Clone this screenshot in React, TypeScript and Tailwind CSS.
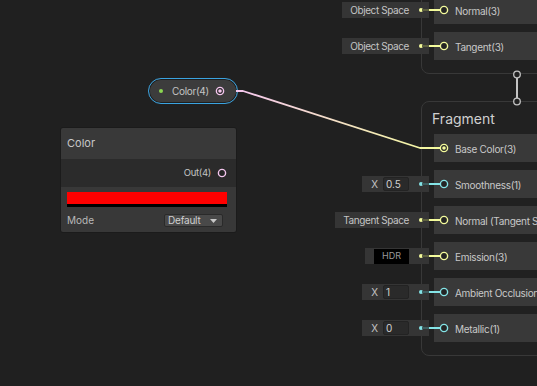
import React from "react";

const YELLOW = "#f4fb9c";
const CYAN = "#84e4e7";
const PINK = "#f4c6ee";

const Port = ({ color, connected }: { color: string; connected?: boolean }) => (
  <svg width="10" height="10" viewBox="0 0 10 10" className="shrink-0">
    <circle cx="5" cy="5" r="3.6" fill="#242424" stroke={color} strokeWidth="1.4" />
    {connected && <circle cx="5" cy="5" r="1.8" fill={color} />}
  </svg>
);

interface SlotProps {
  label: string;
  color: string;
  dim: string;
  connected?: boolean;
  field?: React.ReactNode;
  fieldWidth?: string;
}

const Slot = ({ label, color, dim, connected, field, fieldWidth }: SlotProps) => (
  <div className="relative ml-[12px] flex h-7 items-center bg-[#393939]">
    {field && (
      <>
        <div
          className={`absolute right-[calc(100%+5px)] top-[6px] flex h-4 items-center justify-end gap-[10px] bg-[#353535] pr-[6px] ${fieldWidth}`}
        >
          {field}
          <span className="h-[4px] w-[4px] rounded-full" style={{ background: color }} />
        </div>
        <div className="absolute left-[-12px] top-[13px] h-[2px] w-[7px]" style={{ background: dim }} />
        <div className="absolute left-[-5px] top-[13px] h-[2px] w-[12px]" style={{ background: color }} />
      </>
    )}
    <div className="ml-[5px] flex items-center">
      <Port color={color} connected={connected} />
    </div>
    <span className="ml-[6px] translate-y-[1px] whitespace-nowrap text-[10px] tracking-[-0.3px] text-[#c8c8c8]">
      {label}
    </span>
  </div>
);

const Vec1Field = ({ value }: { value: string }) => (
  <div className="flex items-center gap-[5px]">
    <span className="text-[10px] text-[#c4c4c4]">X</span>
    <span className="flex h-[14px] w-[26px] items-center rounded-[2px] border border-[#232323] bg-[#2a2a2a] pl-[2px] text-[10px] text-[#d2d2d2]">
      {value}
    </span>
  </div>
);

const TextField = ({ value }: { value: string }) => (
  <span className="whitespace-nowrap text-[10px] tracking-[-0.4px] text-[#c4c4c4]">{value}</span>
);

export default function App() {
  return (
    <div
      className="relative h-[386px] w-[537px] overflow-hidden bg-[#202020]"
      style={{ fontFamily: "Inter, 'Noto Sans', sans-serif" }}
    >
      {/* Vertex context (cut off at the top) */}
      <div className="absolute left-[421px] top-[-21px] h-[95px] w-[160px] rounded-[8px] border border-[#383838] bg-[#212121]">
        <div className="flex flex-col gap-2 pt-[16px]">
          <Slot
            label="Normal(3)"
            color={YELLOW}
            dim="#5d603f"
            field={<TextField value="Object Space" />}
            fieldWidth="w-[87px]"
          />
          <Slot
            label="Tangent(3)"
            color={YELLOW}
            dim="#5d603f"
            field={<TextField value="Object Space" />}
            fieldWidth="w-[87px]"
          />
        </div>
      </div>

      {/* Fragment context */}
      <div className="absolute left-[421px] top-[101px] h-[255px] w-[160px] rounded-[8px] border border-[#383838] bg-[#212121]">
        <div className="flex h-[32px] items-center pl-[10px] text-[14px] text-[#d0d0d0]">Fragment</div>
        <div className="flex flex-col gap-2">
          <Slot label="Base Color(3)" color={YELLOW} dim="#5d603f" connected />
          <Slot
            label="Smoothness(1)"
            color={CYAN}
            dim="#3e5e5f"
            field={<Vec1Field value="0.5" />}
            fieldWidth="w-[67px]"
          />
          <Slot
            label="Normal (Tangent Space)(3)"
            color={YELLOW}
            dim="#5d603f"
            field={<TextField value="Tangent Space" />}
            fieldWidth="w-[94px]"
          />
          <Slot
            label="Emission(3)"
            color={YELLOW}
            dim="#5d603f"
            field={
              <span className="flex h-[15px] w-[35px] items-center justify-center bg-black text-[9px] text-[#9a9a9a]">
                HDR
              </span>
            }
            fieldWidth="w-[64px]"
          />
          <Slot
            label="Ambient Occlusion(1)"
            color={CYAN}
            dim="#3e5e5f"
            field={<Vec1Field value="1" />}
            fieldWidth="w-[67px]"
          />
          <Slot
            label="Metallic(1)"
            color={CYAN}
            dim="#3e5e5f"
            field={<Vec1Field value="0" />}
            fieldWidth="w-[67px]"
          />
        </div>
      </div>

      {/* Color property pill */}
      <div className="absolute left-[148px] top-[78px] flex h-[26px] w-[90px] items-center rounded-full border border-[#3aa3e0] bg-[#3c3c3c] shadow-[inset_0_0_0_1px_#1e1e1e]">
        <span className="ml-[10px] h-[4px] w-[4px] rounded-full bg-[#8bd651]" />
        <span className="ml-[9px] text-[10px] tracking-[-0.3px] text-[#c4c4c4]">Color(4)</span>
        <span className="ml-[6px]">
          <Port color={PINK} connected />
        </span>
      </div>

      {/* Color node */}
      <div className="absolute left-[60px] top-[127px] w-[177px] overflow-hidden rounded-[3px] border border-[#1b1b1b]">
        <div className="flex h-[31px] items-center bg-[#393939] pl-[6px] text-[11px] text-[#c8c8c8]">Color</div>
        <div className="flex h-[28px] items-center justify-end gap-[6px] bg-[#2b2b2b] pr-[9px]">
          <span className="text-[9.5px] tracking-[-0.3px] text-[#c4c4c4]">Out(4)</span>
          <Port color={PINK} />
        </div>
        <div className="flex flex-col bg-[#383838] pb-[4px] pl-[6px] pr-[9px] pt-[5px]">
          <div className="h-[15px] border-b-[3px] border-black bg-[#ff0000]" />
          <div className="mt-[6px] flex items-center justify-between pr-[4px]">
            <span className="text-[10px] text-[#b8b8b8]">Mode</span>
            <div className="flex h-[13px] w-[59px] items-center justify-between rounded-[2px] border border-[#2a2a2a] bg-[#494949] pl-[3px] pr-[5px]">
              <span className="text-[10px] tracking-[-0.2px] text-[#d0d0d0]">Default</span>
              <svg width="7" height="4" viewBox="0 0 7 4">
                <path d="M0 0 H7 L3.5 4 Z" fill="#c8c8c8" />
              </svg>
            </div>
          </div>
        </div>
      </div>

      {/* Edges */}
      <svg className="pointer-events-none absolute inset-0" width="537" height="386">
        <defs>
          <linearGradient id="edge" x1="237" y1="0" x2="440" y2="0" gradientUnits="userSpaceOnUse">
            <stop offset="0" stopColor={PINK} />
            <stop offset="1" stopColor={YELLOW} />
          </linearGradient>
        </defs>
        <polyline
          points="236,91 243,91 420,148 440,148"
          fill="none"
          stroke="url(#edge)"
          strokeWidth="1.8"
          strokeLinejoin="round"
        />
        <line x1="517" y1="78" x2="517" y2="98" stroke="#c4c4c4" strokeWidth="2" />
        <circle cx="517" cy="74.5" r="3.3" fill="#222" stroke="#c4c4c4" strokeWidth="1.3" />
        <circle cx="517" cy="101.5" r="3.3" fill="#222" stroke="#c4c4c4" strokeWidth="1.3" />
      </svg>
    </div>
  );
}
